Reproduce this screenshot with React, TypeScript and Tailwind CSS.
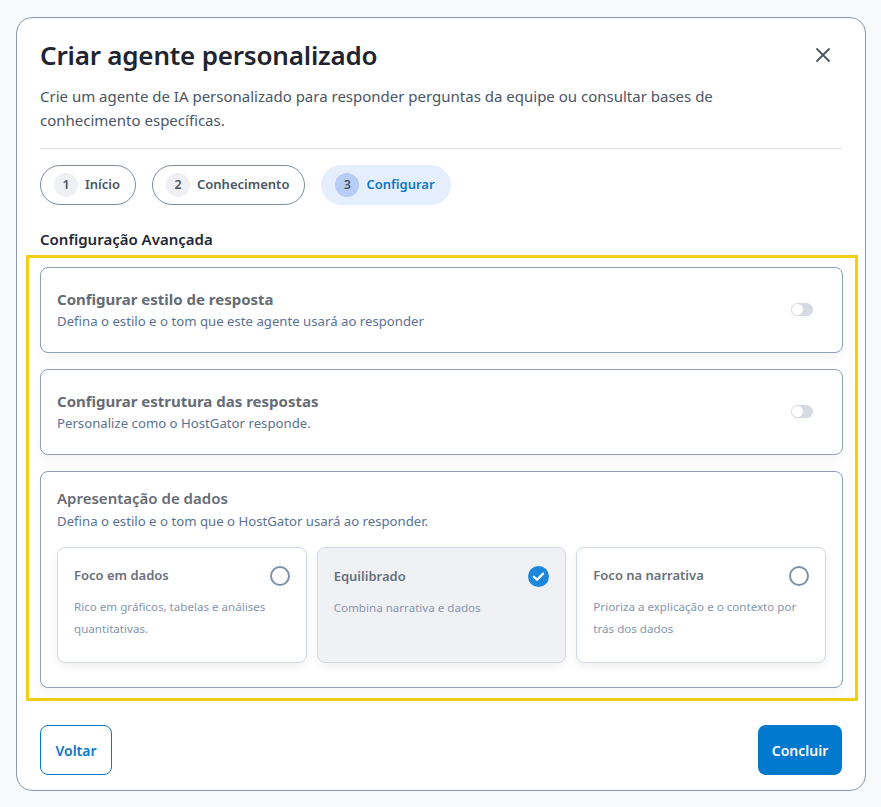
import React from "react";

function Toggle() {
  return (
    <div className="w-[22px] h-[13px] rounded-full bg-[#d5dbe3] flex items-center px-[1px] shadow-[0_2px_4px_rgba(0,0,0,0.04)]">
      <div className="w-[11px] h-[11px] rounded-full bg-white" />
    </div>
  );
}

function Radio({ checked }: { checked?: boolean }) {
  if (checked) {
    return (
      <svg width="21" height="21" viewBox="0 0 20 20">
        <circle cx="10" cy="10" r="10" fill="#1d88d8" />
        <path d="M5.6 10.2 L8.6 13.1 L14.4 7.3" stroke="white" strokeWidth="2.2" fill="none" strokeLinecap="round" strokeLinejoin="round" />
      </svg>
    );
  }
  return <div className="w-[20px] h-[20px] rounded-full border-2 border-[#7f91a8] bg-white" />;
}

function Option({ title, desc, checked }: { title: string; desc: string; checked?: boolean }) {
  return (
    <div
      className={`flex-1 h-[116px] rounded-lg border px-[16px] pt-[18px] shadow-[0_4px_10px_rgba(15,23,42,0.06)] ${
        checked ? "bg-[#eff1f5] border-[#d3dae3]" : "bg-white border-[#cfd8e3]"
      }`}
    >
      <div className="flex items-center justify-between">
        <span className="text-[13px] font-semibold text-[#6a7079]">{title}</span>
        <Radio checked={checked} />
      </div>
      <p className="mt-[10px] text-[11.6px] leading-[22px] text-[#8596ae] pr-2">{desc}</p>
    </div>
  );
}

function Step({ n, label, active }: { n: number; label: string; active?: boolean }) {
  return (
    <div
      className={`h-[40px] rounded-full flex items-center gap-[7px] pl-[13px] pr-[15px] ${
        active ? "bg-[#e5eefc] border border-[#e5eefc]" : "border border-[#7d8ea5] bg-white"
      }`}
    >
      <span
        className={`w-[24px] h-[24px] rounded-full flex items-center justify-center text-[12.5px] font-semibold text-[#4b5563] ${
          active ? "bg-[#b6cdf5]" : "bg-[#eef0f3]"
        }`}
      >
        {n}
      </span>
      <span className={`text-[13px] font-semibold ${active ? "text-[#0a78c9]" : "text-[#4b5563]"}`}>{label}</span>
    </div>
  );
}

export default function App() {
  return (
    <div
      className="min-h-[807px] bg-[#f8f9fa] pt-[17px] pl-[16px]"
      style={{ fontFamily: '"Noto Sans", "Open Sans", sans-serif' }}
    >
      <div className="w-[850px] h-[774px] bg-white border border-[#8b9ab0] rounded-[16px] px-[23px] pt-[19px] pb-[15px] flex flex-col">
        <div className="flex items-start justify-between">
          <h1 className="text-[26px] leading-[36px] font-semibold text-[#1f2430] tracking-[-0.2px]">
            Criar agente personalizado
          </h1>
          <svg width="16" height="16" viewBox="0 0 16 16" className="mt-[10px] mr-[11px]">
            <path d="M2 2 L14 14 M14 2 L2 14" stroke="#4b5563" strokeWidth="1.8" strokeLinecap="round" />
          </svg>
        </div>
        <p className="mt-[11px] max-w-[730px] text-[15px] leading-[24px] text-[#4b5563]">
          Crie um agente de IA personalizado para responder perguntas da equipe ou consultar bases de conhecimento
          específicas.
        </p>
        <div className="mt-[16px] h-px bg-[#e2e5e9]" />
        <div className="mt-[16px] flex gap-[16px]">
          <Step n={1} label="Início" />
          <Step n={2} label="Conhecimento" />
          <Step n={3} label="Configurar" active />
        </div>
        <div className="mt-[23px] text-[15px] leading-[22px] font-semibold text-[#1f2937]">Configuração Avançada</div>
        <div className="mt-[5px] ml-[-14px] mr-[-16px] border-[3px] border-[#f2cf14] pl-[11px] pr-[12px] pt-[9px] pb-[10px] flex flex-col gap-[16px]">
          <div className="h-[86px] rounded-lg border border-[#8e9fb5] bg-white px-[16px] flex items-center justify-between shadow-[0_6px_10px_rgba(15,23,42,0.04)]">
            <div>
              <div className="text-[15px] leading-[22px] font-bold text-[#666c75]">Configurar estilo de resposta</div>
              <div className="text-[13.2px] leading-[22px] text-[#5a7293]">
                Defina o estilo e o tom que este agente usará ao responder
              </div>
            </div>
            <div className="mr-[13px] mb-[2px]">
              <Toggle />
            </div>
          </div>
          <div className="h-[86px] rounded-lg border border-[#8e9fb5] bg-white px-[16px] flex items-center justify-between shadow-[0_6px_10px_rgba(15,23,42,0.04)]">
            <div>
              <div className="text-[15px] leading-[22px] font-bold text-[#666c75]">Configurar estrutura das respostas</div>
              <div className="text-[13.2px] leading-[22px] text-[#5a7293]">Personalize como o HostGator responde.</div>
            </div>
            <div className="mr-[13px] mb-[2px]">
              <Toggle />
            </div>
          </div>
          <div className="rounded-lg border border-[#8e9fb5] bg-white px-[16px] pt-[15px] pb-[24px] shadow-[0_6px_10px_rgba(15,23,42,0.04)]">
            <div className="text-[15px] leading-[22px] font-semibold text-[#666c75]">Apresentação de dados</div>
            <div className="mt-[1px] text-[13.2px] leading-[22px] text-[#5a7293]">
              Defina o estilo e o tom que o HostGator usará ao responder.
            </div>
            <div className="mt-[15px] flex gap-[10px]">
              <Option title="Foco em dados" desc="Rico em gráficos, tabelas e análises quantitativas." />
              <Option title="Equilibrado" desc="Combina narrativa e dados" checked />
              <Option title="Foco na narrativa" desc="Prioriza a explicação e o contexto por trás dos dados" />
            </div>
          </div>
        </div>
        <div className="mt-auto flex items-center justify-between">
          <button className="h-[50px] w-[72px] rounded-lg border border-[#0a78c9] bg-white text-[14px] font-semibold text-[#0a78c9]">
            Voltar
          </button>
          <button className="h-[50px] w-[84px] rounded-lg bg-[#0079cf] text-[14px] font-semibold text-white">
            Concluir
          </button>
        </div>
      </div>
    </div>
  );
}
